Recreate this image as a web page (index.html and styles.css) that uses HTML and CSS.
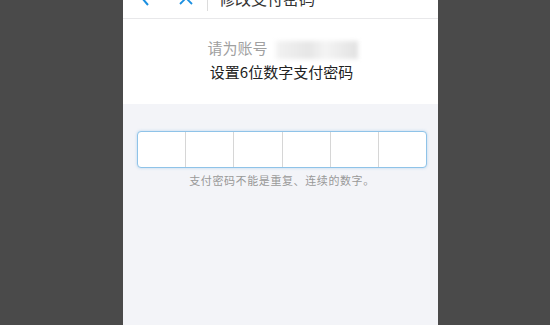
FILE: index.html
```html
<!DOCTYPE html>
<html lang="zh-CN">
<head>
    <meta charset="UTF-8">
    <meta name="viewport" content="width=device-width, initial-scale=1.0">
    <title>修改支付密码</title>
    <link rel="stylesheet" href="styles.css">
</head>
<body>
    <div class="phone">
        <!-- Top bar -->
        <header class="top-bar">
            <svg class="icon-back" width="10" height="16" viewBox="0 0 10 16">
                <polyline points="8,1 2,8 8,15" fill="none" stroke="#1b8fe0" stroke-width="2"/>
            </svg>
            <svg class="icon-close" width="14" height="14" viewBox="0 0 14 14">
                <line x1="1" y1="1" x2="13" y2="13" stroke="#1b8fe0" stroke-width="1.8"/>
                <line x1="13" y1="1" x2="1" y2="13" stroke="#1b8fe0" stroke-width="1.8"/>
            </svg>
            <span class="bar-divider"></span>
            <span class="bar-title">修改支付密码</span>
        </header>

        <!-- Prompt -->
        <div class="prompt">
            <div class="prompt-line gray">请为账号<span class="account-blur"></span></div>
            <div class="prompt-line">设置6位数字支付密码</div>
        </div>

        <!-- Password input -->
        <div class="pay-area">
            <div class="pay-box">
                <div class="pay-cell"></div>
                <div class="pay-cell"></div>
                <div class="pay-cell"></div>
                <div class="pay-cell"></div>
                <div class="pay-cell"></div>
                <div class="pay-cell"></div>
            </div>
            <p class="pay-hint">支付密码不能是重复、连续的数字。</p>
        </div>
    </div>
</body>
</html>
```

FILE: styles.css
```css
/* Page */
body {
    margin: 0;
    background-color: #4a4a4a;
    font-family: "Noto Sans CJK SC", "Liberation Sans", sans-serif;
    overflow: hidden;
}

.phone {
    width: 315px;
    height: 325px;
    margin-left: 123px;
    background-color: #f3f4f8;
    overflow: hidden;
}

/* Top bar */
.top-bar {
    height: 40px;
    margin-top: -22px;
    background-color: #fff;
    border-bottom: 1px solid #e8e8ea;
    display: flex;
    align-items: center;
    padding-left: 17px;
}

.icon-close {
    margin-left: 29px;
}

.bar-divider {
    width: 1px;
    height: 26px;
    background-color: #dcdcdc;
    margin-left: 14px;
}

.bar-title {
    margin-left: 11px;
    font-size: 16px;
    color: #333;
}

/* Prompt */
.prompt {
    background-color: #fff;
    height: 68px;
    padding: 17px 0 0;
    text-align: center;
}

.prompt-line {
    font-size: 15px;
    line-height: 24px;
    color: #222;
    padding-left: 2px;
}

.prompt-line.gray {
    color: #a0a0a0;
    padding-left: 4px;
}

.account-blur {
    display: inline-block;
    vertical-align: middle;
    width: 82px;
    height: 18px;
    margin-left: 8px;
    background: linear-gradient(90deg, #f2f2f2, #e6e6e6 40%, #f4f4f4 60%, #e2e2e2);
    filter: blur(2px);
}

/* Password input */
.pay-area {
    padding-top: 27px;
}

.pay-box {
    margin: 0 11px 0 14px;
    height: 35px;
    border: 1px solid #8fc3e8;
    border-radius: 4px;
    background-color: #fff;
    box-shadow: 0 0 3px rgba(110, 175, 230, 0.45);
    display: flex;
}

.pay-cell {
    flex: 1;
    border-left: 1px solid #d6d6d6;
}

.pay-cell:first-child {
    border-left: none;
}

.pay-hint {
    margin: 5px 0 0;
    padding-left: 3px;
    font-size: 11px;
    line-height: 14px;
    letter-spacing: 0.6px;
    text-align: center;
    color: #999;
}
```
